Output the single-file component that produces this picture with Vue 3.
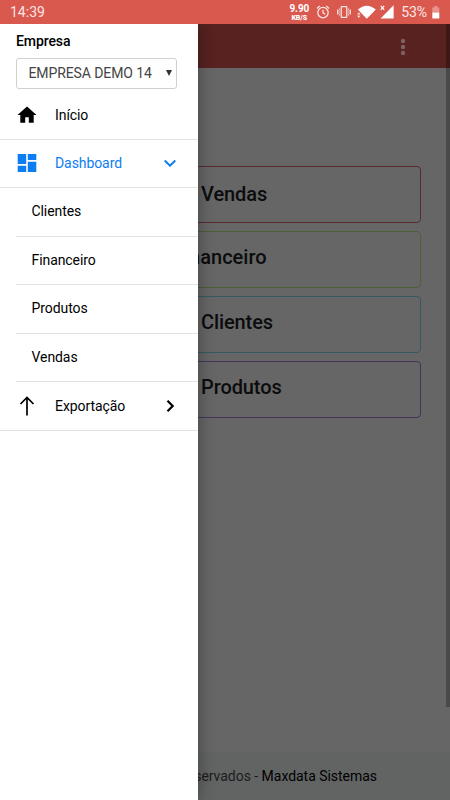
<script setup>
const cards = [
  { label: 'Vendas', tone: 'red' },
  { label: 'Financeiro', tone: 'green' },
  { label: 'Clientes', tone: 'cyan' },
  { label: 'Produtos', tone: 'purple' },
]
const children = ['Clientes', 'Financeiro', 'Produtos', 'Vendas']
</script>

<template>
  <div class="screen">
    <header class="status">
      <span class="clock">14:39</span>
      <div class="indicators">
        <div class="rate"><b>9.90</b><small>KB/S</small></div>
        <svg class="alarm" width="14" height="14" viewBox="0 0 14 14" fill="none" stroke="#fbe3e1">
          <circle cx="7" cy="7.600" r="5.200" stroke-width="1.300" />
          <path d="M7 4.700v3.100l2.100 1.300M.9 3.500 3.800 1M13.100 3.500 10.200 1" stroke-width="1.300" />
        </svg>
        <svg class="vibrate" width="14" height="14" viewBox="0 0 14 14" fill="none" stroke="#fbe3e1">
          <rect x="4.200" y="1.700" width="5.600" height="10.600" rx=".6" stroke-width="1.300" />
          <path d="M2.300 3.500v1.300l-.7 1 .7 1.200-.7 1.200.7 1V10.500M.5 4.500v5M11.700 3.500v1.300l.7 1-.7 1.200.7 1.200-.7 1V10.500M13.500 4.500v5" stroke-width=".9" />
        </svg>
        <svg class="wifi" width="19" height="14" viewBox="0 0 19 14" fill="#fff">
          <path d="M.8 4.600Q9.800-3 18.800 4.600L9.800 13.800Z" />
          <path d="M-.3 9.800 1.800 7l2.100 2.800ZM-.3 10.300h4.200L1.800 13.200Z" stroke="#d9594f" stroke-width=".6" />
        </svg>
        <svg class="signal" width="14" height="14" viewBox="0 0 14 14" fill="#fff">
          <path d="M13.600.2V13.500H.6Z" />
          <path d="m.8.800 3.400 4M4.200.8.800 4.800" fill="none" stroke="#fff" stroke-width="1.200" />
        </svg>
        <span class="percent">53%</span>
        <svg class="battery" width="8" height="13" viewBox="0 0 8 13">
          <path d="M2.300 0h3v1.500h2V6.500H.3V1.500h2Z" fill="#e8938c" />
          <path d="M.3 6.500h7v6H.3Z" fill="#fff" />
        </svg>
      </div>
    </header>

    <div class="stage">
      <div class="page">
        <div class="toolbar">
          <svg width="6" height="18" viewBox="0 0 6 18" fill="#80605f">
            <circle cx="3" cy="3" r="2.200" /><circle cx="3" cy="9" r="2.200" /><circle cx="3" cy="15" r="2.200" />
          </svg>
        </div>
        <main class="cards">
          <div v-for="c in cards" :key="c.label" class="card" :class="c.tone">{{ c.label }}</div>
        </main>
        <footer class="footer"><span>Todos os direitos reservados - </span><strong>Maxdata Sistemas</strong></footer>
        <div class="scrollbar"></div>
      </div>

      <aside class="drawer">
        <div class="company">
          <label>Empresa</label>
          <div class="select">
            <span>EMPRESA DEMO 14</span>
            <svg width="6" height="6" viewBox="0 0 6 6"><path d="M0 0h6L3 6Z" fill="#333" /></svg>
          </div>
        </div>
        <nav>
          <div class="item">
            <svg class="icon" width="20" height="20" viewBox="0 0 20 20"><path d="M8.200 17.800V12.200h3.600v5.600h4.900v-7.700h2.800L10 1.500.5 10.100h2.800v7.700Z" /></svg>
            <span>Início</span>
          </div>
          <div class="item active">
            <svg class="icon" width="20" height="20" viewBox="0 0 20 20" fill="#0d7df2"><path d="M.7 1h8.500v10H.7ZM10.800 1h8.500v6h-8.500ZM.7 12.800h8.500V19H.7ZM10.800 8.800h8.500V19h-8.500Z" /></svg>
            <span>Dashboard</span>
            <svg class="arrow" width="14" height="14" viewBox="0 0 14 14" fill="none" stroke="#0d7df2" stroke-width="2"><path d="m1.700 4.500 5.300 5.200 5.300-5.200" /></svg>
          </div>
          <div v-for="c in children" :key="c" class="child">{{ c }}</div>
          <div class="item">
            <svg class="icon" width="20" height="20" viewBox="0 0 20 20" fill="none" stroke="#000" stroke-width="1.700"><path d="M10 19.500V1.500M3.500 8 10 1.500 16.500 8" /></svg>
            <span>Exportação</span>
            <svg class="arrow" width="14" height="14" viewBox="0 0 14 14" fill="none" stroke="#000" stroke-width="2.200"><path d="m4.500 1.800 5.200 5.200-5.200 5.200" /></svg>
          </div>
        </nav>
      </aside>
    </div>
  </div>
</template>

<style>
body { margin: 0; }
</style>

<style scoped>
.screen { width: 450px; height: 800px; display: flex; flex-direction: column; overflow: hidden; font-family: Roboto, sans-serif; color: #000; }
.screen * { box-sizing: border-box; }
.status { height: 24px; flex: none; background: #d9594f; color: #fbe6e4; display: flex; align-items: center; justify-content: space-between; padding: 0 10px; font-size: 14px; line-height: 24px; }
.clock { letter-spacing: 0; }
.indicators { display: flex; align-items: center; }
.rate { width: 20px; display: flex; flex-direction: column; align-items: center; color: #fff; white-space: nowrap; }
.rate b { font-size: 10px; line-height: 11px; letter-spacing: -.1px; }
.rate small { font-size: 7px; line-height: 8px; font-weight: 900; }
.alarm { margin-left: 7px; }
.vibrate { margin-left: 7px; }
.wifi { margin-left: 6px; }
.signal { margin-left: 4px; }
.percent { margin-left: 7px; font-size: 14px; letter-spacing: -.1px; }
.battery { margin-left: 5px; }
.stage { position: relative; flex: 1; min-height: 0; overflow: hidden; }
.page { height: 100%; display: flex; flex-direction: column; background: #666; }
.toolbar { height: 44px; flex: none; background: #572220; display: flex; align-items: center; justify-content: flex-end; padding: 2px 44px 0 0; }
.cards { flex: 1; padding: 98px 29px 0; display: flex; flex-direction: column; gap: 8px; }
.card { height: 57px; border: 1px solid; border-radius: 4px; padding-left: 171px; font-size: 20px; font-weight: 500; line-height: 55px; letter-spacing: -.1px; color: #0b0c0d; white-space: nowrap; }
.card:nth-child(n + 3) { line-height: 51px; }
.card.green { padding-left: 143px; line-height: 51px; letter-spacing: 0; }
.card.red { border-color: #592b31; }
.card.green { border-color: #4d6038; }
.card.cyan { border-color: #345a61; }
.card.purple { border-color: #453459; }
.footer { height: 48px; flex: none; background: #626464; display: flex; justify-content: center; align-items: center; white-space: pre; font-size: 14px; letter-spacing: -.03px; padding-right: 1px; color: #1b1b20; }
.footer strong { font-weight: 400; color: #000; }
.scrollbar { position: absolute; top: 0; right: 0; width: 4px; height: 683px; background: rgba(0, 0, 0, .28); }
.drawer { position: absolute; inset: 0 auto 0 0; width: 198px; background: #fff; box-shadow: 0 0 16px rgba(0, 0, 0, .36); }
.company { height: 67px; padding: 8px 21px 0 16px; }
.company label { display: block; font-size: 14px; line-height: 18px; font-weight: 500; letter-spacing: -.1px; }
.select { height: 31px; margin-top: 8px; border: 1px solid #ced0d2; border-radius: 3px; display: flex; align-items: center; justify-content: space-between; padding: 0 4px 2px 11.500px; font-size: 14px; letter-spacing: -.1px; color: #444; white-space: nowrap; }
.item { height: 48.500px; display: flex; align-items: center; padding: 0 21px 0 17.500px; border-bottom: 1px solid #e2e2e2; font-size: 14px; letter-spacing: -.08px; }
.item .icon { margin-left: -.5px; }
.item span { margin-left: 18px; flex: 1; }
.item.active { color: #0d7df2; }
.child { height: 48.500px; margin-left: 16px; padding: 0 0 1px 15.500px; display: flex; align-items: center; border-bottom: 1px solid #e2e2e2; font-size: 14px; letter-spacing: -.08px; }
</style>
